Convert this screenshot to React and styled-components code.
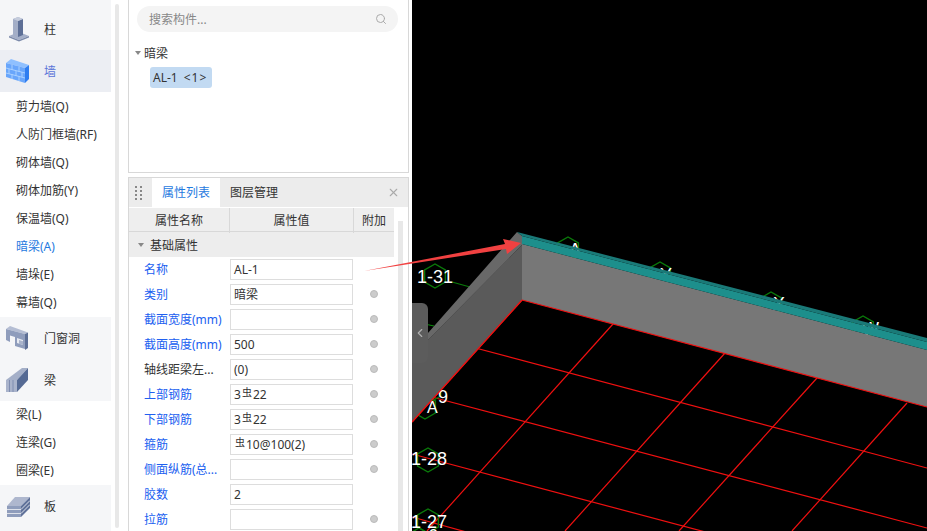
import React from 'react';
import styled, { createGlobalStyle } from 'styled-components';
import { Search, X, ChevronLeft } from 'lucide-react';

const GlobalStyle = createGlobalStyle`
  html, body { margin: 0; padding: 0; background: #fff; }
  body { font-family: "Noto Sans", "Noto Sans CJK SC", sans-serif; font-size: 12px; color: #333; }
`;

const Page = styled.div`
  position: relative;
  display: flex;
  width: 927px;
  height: 531px;
  overflow: hidden;
  background: #fff;
`;

/* left component nav */
const Nav = styled.nav`
  width: 111px;
  flex: none;
`;
const Group = styled.div`
  background: #f5f6f8;
  padding-top: ${p => (p.$first ? '8px' : '0')};
  padding-bottom: ${p => (p.$last ? '6px' : '0')};
`;
const GroupRow = styled.div`
  display: flex;
  align-items: center;
  height: 42px;
  padding-left: 6px;
  background: ${p => (p.$active ? '#eceef3' : 'transparent')};
  color: ${p => (p.$active ? '#5a74d8' : '#333')};
  svg { width: 24px; height: 26px; flex: none; }
`;
const GroupLabel = styled.span`
  margin-left: 14px;
`;
const List = styled.div`
  padding-top: ${p => (p.$pad ? '1px' : '0')};
`;
const ListItem = styled.div`
  height: 28px;
  line-height: 28px;
  padding-left: 16px;
  white-space: nowrap;
  color: ${p => (p.$active ? '#1f7ae0' : '#333')};
`;
const NavScroll = styled.div`
  width: 4px;
  flex: none;
  margin: 4px 9px 3px 4px;
  background: #e8e8e8;
  border-radius: 2px;
`;

/* middle panels */
const Middle = styled.div`
  width: 281px;
  flex: none;
  display: flex;
  flex-direction: column;
  gap: 4px;
`;
const TreePanel = styled.section`
  height: 173px;
  flex: none;
  box-sizing: border-box;
  border: 1px solid #d8d8d8;
  border-top: 0;
  padding: 6px 10px 0 8px;
`;
const SearchBox = styled.div`
  display: flex;
  align-items: center;
  justify-content: space-between;
  height: 26px;
  padding: 0 11px 0 12px;
  border-radius: 13px;
  background: #f4f4f4;
  color: #888;
  svg { width: 12px; height: 12px; color: #aaa; }
`;
const TreeTitle = styled.div`
  display: flex;
  align-items: center;
  gap: 3px;
  margin: 12px 0 5px -2px;
  height: 18px;
  color: #333;
`;
const Caret = styled.i`
  display: block;
  width: 0;
  height: 0;
  border-left: 3px solid transparent;
  border-right: 3px solid transparent;
  border-top: 4px solid #888;
`;
const Chip = styled.div`
  display: block;
  margin-left: 13px;
  padding: 0 3px;
  height: 21px;
  line-height: 21px;
  width: 56px;
  border-radius: 3px;
  background: #c2daf2;
  color: #333;
  white-space: nowrap;
  small { font-size: 12px; margin-left: 6px; letter-spacing: 1px; }
`;
const PropsPanel = styled.section`
  flex: 1;
  position: relative;
  border: 1px solid #d8d8d8;
  border-bottom: 0;
`;
const TabBar = styled.div`
  display: flex;
  align-items: center;
  height: 29px;
  background: #ececec;
  padding-right: 8px;
  svg.close { width: 13px; height: 13px; color: #aaa; margin-left: auto; }
`;
const Grip = styled.div`
  display: grid;
  grid-template-columns: 2px 2px;
  gap: 2px 3px;
  margin: 0 10px 0 6px;
  i { display: block; width: 2px; height: 2px; background: #888; }
`;
const Tab = styled.div`
  height: 29px;
  line-height: 29px;
  padding: 0 10px;
  width: 48px;
  white-space: nowrap;
  background: ${p => (p.$active ? '#fff' : 'transparent')};
  color: ${p => (p.$active ? '#1f7ae0' : '#333')};
`;
const Table = styled.div`
  width: 265px;
  margin-top: 1px;
`;
const HeadRow = styled.div`
  display: grid;
  grid-template-columns: 101px 124px 40px;
  height: 23px;
  background: #eee;
  border-bottom: 1px solid #d8d8d8;
`;
const HeadCell = styled.div`
  text-align: center;
  line-height: 25px;
  border-right: 1px solid #d8d8d8;
  color: #333;
  &:last-child { border-right: 0; }
`;
const SectionRow = styled.div`
  display: flex;
  align-items: center;
  gap: 6px;
  height: 25px;
  padding-left: 9px;
  background: #ededed;
`;
const Row = styled.div`
  display: grid;
  grid-template-columns: 101px 123px 41px;
  align-items: center;
  height: 25px;
`;
const Label = styled.div`
  padding-left: 15px;
  margin-top: -1px;
  white-space: nowrap;
  color: ${p => (p.$plain ? '#333' : '#2060f0')};
`;
const Value = styled.div`
  box-sizing: border-box;
  height: 21px;
  line-height: 19px;
  padding-left: 3px;
  border: 1px solid #ddd;
  background: #fff;
  white-space: nowrap;
`;
const Rebar = styled.span`
  font-size: 10px;
  position: relative;
  top: -3px;
  margin: 0 1px;
`;
const Dot = styled.i`
  display: block;
  justify-self: center;
  margin-top: -1px;
  width: 8px;
  height: 8px;
  border-radius: 50%;
  background: #ccc;
  border: 1px solid #bbb;
  box-sizing: border-box;
`;
const PanelScroll = styled.div`
  position: absolute;
  right: 5px;
  top: 43px;
  bottom: 0;
  width: 5px;
  background: #e8e8e8;
`;

/* 3d viewport */
const Viewport = styled.main`
  position: relative;
  margin-left: 3px;
  flex: 1;
  background: #000;
  overflow: hidden;
  svg.scene { display: block; }
`;
const CollapseTab = styled.div`
  position: absolute;
  left: 0;
  top: 303px;
  width: 16px;
  height: 60px;
  display: flex;
  align-items: center;
  justify-content: center;
  background: #5c5c5c;
  border-radius: 0 6px 6px 0;
  color: #b0b0b0;
  svg { width: 14px; height: 14px; }
`;
const ArrowMark = styled.svg`
  position: absolute;
  left: 360px;
  top: 235px;
`;

const rb = n => <><Rebar>虫</Rebar>{n}</>;

const rows = [
  { label: '名称', value: 'AL-1', noDot: true },
  { label: '类别', value: '暗梁' },
  { label: '截面宽度(mm)', value: '' },
  { label: '截面高度(mm)', value: '500' },
  { label: '轴线距梁左...', value: '(0)', plain: true },
  { label: '上部钢筋', value: <>3{rb('22')}</> },
  { label: '下部钢筋', value: <>3{rb('22')}</> },
  { label: '箍筋', value: rb('10@100(2)') },
  { label: '侧面纵筋(总...', value: '' },
  { label: '胶数', value: '2', noDot: true },
  { label: '拉筋', value: '' },
];

const ColumnIcon = () => (
  <svg viewBox="0 0 24 26">
    <path d="M3 20l10-4 10 4-10 4z" fill="#a4afc8" />
    <path d="M3 20l10 4v1.500L3 21.500zM23 20l-10 4v1.500l10-4z" fill="#7b89a9" />
    <path d="M7 3l5-2 5 2v16l-5 2-5-2z" fill="#a3aec7" />
    <path d="M12 5l5-2v16l-5 2z" fill="#5d6f96" />
    <path d="M7 3l5-2 5 2-5 2z" fill="#c5ccdc" />
  </svg>
);

const BrickIcon = () => (
  <svg viewBox="0 0 24 26">
    <path d="M0 5l5-4 18 6-4 3z" fill="#8fc0ff" />
    <path d="M0 5l19 5v15L0 19z" fill="#69a6fb" />
    <path d="M19 10l4-3v14l-4 4z" fill="#2e7df0" />
    <path d="M0 10l19 5M0 15l19 5M6 7l0 5M13 9l0 5M3 11l0 5M10 13l0 5M16 14l0 5M6 16l0 5M13 18l0 5" stroke="#a9d0ff" strokeWidth="1" fill="none" />
  </svg>
);

const DoorIcon = () => (
  <svg viewBox="0 0 24 26">
    <path d="M0 4L4 1l18 6.500L19 9z" fill="#b4bdd3" />
    <path d="M0 4l19 5v15l-10-3v-9l-5-1.500V17l-4-2z" fill="#8f9dbc" />
    <path d="M19 9l3-1.500V23l-3 2z" fill="#5d6f96" />
    <path d="M11 13l6 2v5l-6-2z" fill="#e8ebf2" />
    <path d="M13 15l4 1.300V20l-4-1.300z" fill="#a9b3cb" />
  </svg>
);

const BeamIcon = () => (
  <svg viewBox="0 0 24 26">
    <path d="M0 13L16 1h6L11 13z" fill="#a4afc8" />
    <path d="M11 13L22 1v12L11 25z" fill="#556a94" />
    <path d="M0 13h11v12H0z" fill="#a9b3cb" />
    <path d="M3.500 13v12M7 13v12" stroke="#7f8db0" strokeWidth="1" />
  </svg>
);

const SlabIcon = () => (
  <svg viewBox="0 0 24 26">
    <path d="M1 13L9 4h15l-9 9z" fill="#aeb7ce" />
    <path d="M1 13h14v11H1z" fill="#8f9dbc" />
    <path d="M15 13l9-9v11l-9 9z" fill="#5f7199" />
    <path d="M1 16.500h14l9-9M1 20.500h14l9-9" stroke="#dde1ea" strokeWidth="1" fill="none" />
  </svg>
);

const hex = (cx, cy, r = 12) => {
  const pts = [];
  for (let i = 0; i < 6; i++) {
    const a = Math.PI / 6 + (i * Math.PI) / 3;
    pts.push(`${(cx + r * Math.cos(a)).toFixed(1)},${(cy + r * Math.sin(a)).toFixed(1)}`);
  }
  return pts.join(' ');
};

const redLines = [
  [412, 422, 522, 300],
  [468, 346, 927, 468],
  [428, 396, 927, 528],
  [412, 454, 792, 555],
  [412, 517, 470, 533],
  [613, 324, 427, 531],
  [725, 353, 565, 531],
  [817, 378, 679, 531],
  [907, 403, 792, 531],
];

const axes = [
  { x: 435, y: 276, t: '1-31', tx: 417, ty: 283 },
  { x: 568, y: 249, t: 'A', tx: 569, ty: 256 },
  { x: 660, y: 274, t: 'Y', tx: 660, ty: 281 },
  { x: 771, y: 304, t: 'X', tx: 773, ty: 310 },
  { x: 863, y: 328, t: 'W', tx: 862, ty: 335 },
  { x: 432, y: 391, t: '9', tx: 438, ty: 403, r: 10 },
  { x: 425, y: 407, t: 'A', tx: 427, ty: 413, fs: 16 },
  { x: 428, y: 460, t: '1-28', tx: 411, ty: 465 },
  { x: 428, y: 521, t: '1-27', tx: 411, ty: 528 },
  { x: 419, y: 540, t: '6', tx: 428, ty: 542 },
];

const Scene = () => (
  <svg className="scene" width="515" height="531" viewBox="412 0 515 531">
    {redLines.map((l, i) => (
      <line key={i} x1={l[0]} y1={l[1]} x2={l[2]} y2={l[3]} stroke="#f01010" strokeWidth="1.2" />
    ))}
    <line x1="452" y1="282" x2="470" y2="287" stroke="#0a7a0a" strokeWidth="1.2" />
    <line x1="420" y1="323" x2="434" y2="326" stroke="#0a8a0a" strokeWidth="1.2" />
    {axes.map(a => (
      <polygon key={a.t + a.x} points={hex(a.x, a.y, a.r)} fill="none" stroke="#0a7a0a" strokeWidth="1.4" />
    ))}
    {axes.map(a => (
      <text key={a.t + a.tx} x={a.tx} y={a.ty} fill="#fff" fontFamily="Liberation Sans" fontSize={a.fs || 18}>{a.t}</text>
    ))}
    {/* left wall */}
    <path d="M522 245V300L412 422V356Z" fill="#5a5a5a" />
    <path d="M517 232L522 236V245L428 340L412 356V351L428 333Z" fill="#686868" />
    {/* long wall */}
    <path d="M522 244L927 350V407L522 300Z" fill="#777" />
    <path d="M522 236L927 342V350L522 244Z" fill="#1d8f8c" />
    <path d="M517 232L927 338V342L522 236Z" fill="#1a7a78" />
    <line x1="522" y1="300" x2="927" y2="407" stroke="#f01010" strokeWidth="1.2" />
    <line x1="522" y1="300" x2="412" y2="422" stroke="#f01010" strokeWidth="1.2" />
  </svg>
);

export default function App() {
  return (
    <Page>
      <GlobalStyle />
      <Nav>
        <Group $first>
          <GroupRow><ColumnIcon /><GroupLabel>柱</GroupLabel></GroupRow>
          <GroupRow $active><BrickIcon /><GroupLabel>墙</GroupLabel></GroupRow>
        </Group>
        <List $pad>
          <ListItem>剪力墙(Q)</ListItem>
          <ListItem>人防门框墙(RF)</ListItem>
          <ListItem>砌体墙(Q)</ListItem>
          <ListItem>砌体加筋(Y)</ListItem>
          <ListItem>保温墙(Q)</ListItem>
          <ListItem $active>暗梁(A)</ListItem>
          <ListItem>墙垛(E)</ListItem>
          <ListItem>幕墙(Q)</ListItem>
        </List>
        <Group>
          <GroupRow><DoorIcon /><GroupLabel>门窗洞</GroupLabel></GroupRow>
          <GroupRow><BeamIcon /><GroupLabel>梁</GroupLabel></GroupRow>
        </Group>
        <List>
          <ListItem>梁(L)</ListItem>
          <ListItem>连梁(G)</ListItem>
          <ListItem>圈梁(E)</ListItem>
        </List>
        <Group $last>
          <GroupRow><SlabIcon /><GroupLabel>板</GroupLabel></GroupRow>
        </Group>
      </Nav>
      <NavScroll />
      <Middle>
        <TreePanel>
          <SearchBox>搜索构件...<Search /></SearchBox>
          <TreeTitle><Caret />暗梁</TreeTitle>
          <Chip>AL-1<small>&lt;1&gt;</small></Chip>
        </TreePanel>
        <PropsPanel>
          <TabBar>
            <Grip>{[0, 1, 2, 3, 4, 5, 6, 7].map(i => <i key={i} />)}</Grip>
            <Tab $active>属性列表</Tab>
            <Tab>图层管理</Tab>
            <X className="close" />
          </TabBar>
          <Table>
            <HeadRow>
              <HeadCell>属性名称</HeadCell>
              <HeadCell>属性值</HeadCell>
              <HeadCell>附加</HeadCell>
            </HeadRow>
            <SectionRow><Caret />基础属性</SectionRow>
            {rows.map(r => (
              <Row key={r.label}>
                <Label $plain={r.plain}>{r.label}</Label>
                <Value>{r.value}</Value>
                {r.noDot ? <span /> : <Dot />}
              </Row>
            ))}
          </Table>
          <PanelScroll />
        </PropsPanel>
      </Middle>
      <Viewport>
        <Scene />
        <CollapseTab><ChevronLeft /></CollapseTab>
      </Viewport>
      <ArrowMark width="170" height="45" viewBox="360 235 170 45">
        <path d="M364 271L505 244L503 239L521 243L507 254L506 249Z" fill="#f14141" />
      </ArrowMark>
    </Page>
  );
}
